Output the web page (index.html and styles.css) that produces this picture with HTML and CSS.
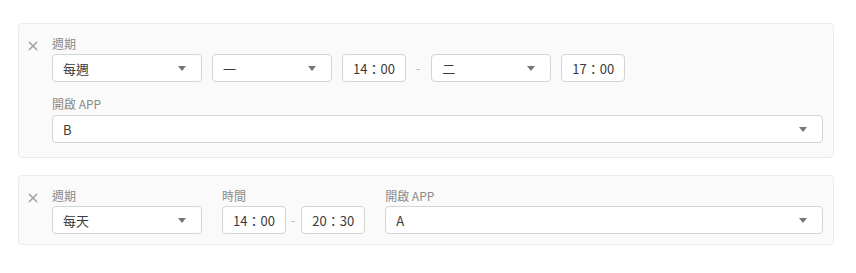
FILE: index.html
```html
<!DOCTYPE html>
<html lang="zh-Hant">
<head>
  <meta charset="UTF-8" />
  <title>排程</title>
  <link rel="stylesheet" href="styles.css">
</head>
<body>
  <div class="lista">
    <div class="regra regra-semana">
      <button class="btn-remover" title="移除">
        <svg width="10" height="10" viewBox="0 0 10 10"><path d="M1 1L9 9M9 1L1 9" /></svg>
      </button>
      <div class="conteudo">
        <div class="linha">
          <div class="campo">
            <span class="rotulo">週期</span>
            <div class="seletor w150"><span>每週</span><i class="seta"></i></div>
          </div>
          <div class="seletor w120"><span>一</span><i class="seta"></i></div>
          <div class="hora">14：00</div>
          <span class="traco">-</span>
          <div class="seletor w120"><span>二</span><i class="seta"></i></div>
          <div class="hora">17：00</div>
        </div>
        <div class="campo campo-app">
          <span class="rotulo">開啟 APP</span>
          <div class="seletor"><span>B</span><i class="seta"></i></div>
        </div>
      </div>
    </div>

    <div class="regra regra-dia">
      <button class="btn-remover" title="移除">
        <svg width="10" height="10" viewBox="0 0 10 10"><path d="M1 1L9 9M9 1L1 9" /></svg>
      </button>
      <div class="conteudo linha linha-larga">
        <div class="campo">
          <span class="rotulo">週期</span>
          <div class="seletor w150"><span>每天</span><i class="seta"></i></div>
        </div>
        <div class="campo">
          <span class="rotulo">時間</span>
          <div class="intervalo">
            <div class="hora">14：00</div>
            <span class="traco">-</span>
            <div class="hora">20：30</div>
          </div>
        </div>
        <div class="campo cresce">
          <span class="rotulo">開啟 APP</span>
          <div class="seletor"><span>A</span><i class="seta"></i></div>
        </div>
      </div>
    </div>
  </div>
</body>
</html>
```

FILE: styles.css
```css
:root {
  --borda: #d4d4d4;
  --borda-card: #ebebeb;
  --fundo-card: #fafafa;
  --texto: #3a3a3a;
  --cinza: #8a8a8a;
}
* {
  box-sizing: border-box;
}
body {
  margin: 0;
  background: #ffffff;
  font-family: "Noto Sans CJK TC", "Noto Sans", sans-serif;
  color: var(--texto);
}
.lista {
  padding: 23px 22px 0 18px;
  display: flex;
  flex-direction: column;
  gap: 17px;
}
.regra {
  display: flex;
  align-items: flex-start;
  background-color: var(--fundo-card);
  border: 1px solid var(--borda-card);
  border-radius: 4px;
  padding: 12px 10px 14px 0;
}
.regra-dia {
  padding-bottom: 10px;
}
.btn-remover {
  width: 33px;
  height: 16px;
  padding: 3px 0 0 9px;
  border: none;
  background: none;
  cursor: pointer;
  text-align: left;
  line-height: 0;
}
.btn-remover path {
  stroke: #999999;
  stroke-width: 1.3;
  fill: none;
}
.conteudo {
  flex: 1;
}
.linha {
  display: flex;
  align-items: flex-end;
  gap: 10px;
}
.linha-larga {
  gap: 20px;
}
.campo {
  display: flex;
  flex-direction: column;
  gap: 2px;
}
.campo-app {
  margin-top: 14px;
  gap: 3px;
}
.cresce {
  flex: 1;
}
.rotulo {
  font-size: 12px;
  line-height: 16px;
  color: var(--cinza);
}
.seletor {
  height: 28px;
  display: flex;
  align-items: center;
  justify-content: space-between;
  padding: 0 15px 0 10px;
  background: #ffffff;
  border: 1px solid var(--borda);
  border-radius: 4px;
  font-size: 13px;
}
.w150 {
  width: 150px;
}
.w120 {
  width: 120px;
}
.seta {
  width: 0;
  height: 0;
  border-left: 4px solid transparent;
  border-right: 4px solid transparent;
  border-top: 5px solid #777777;
}
.hora {
  width: 64px;
  height: 28px;
  display: flex;
  align-items: center;
  justify-content: center;
  background: #ffffff;
  border: 1px solid var(--borda);
  border-radius: 4px;
  font-size: 13px;
}
.traco {
  padding-right: 1px;
  line-height: 28px;
  font-size: 12px;
  color: #aaaaaa;
}
.intervalo {
  display: flex;
  gap: 5px;
}
```
